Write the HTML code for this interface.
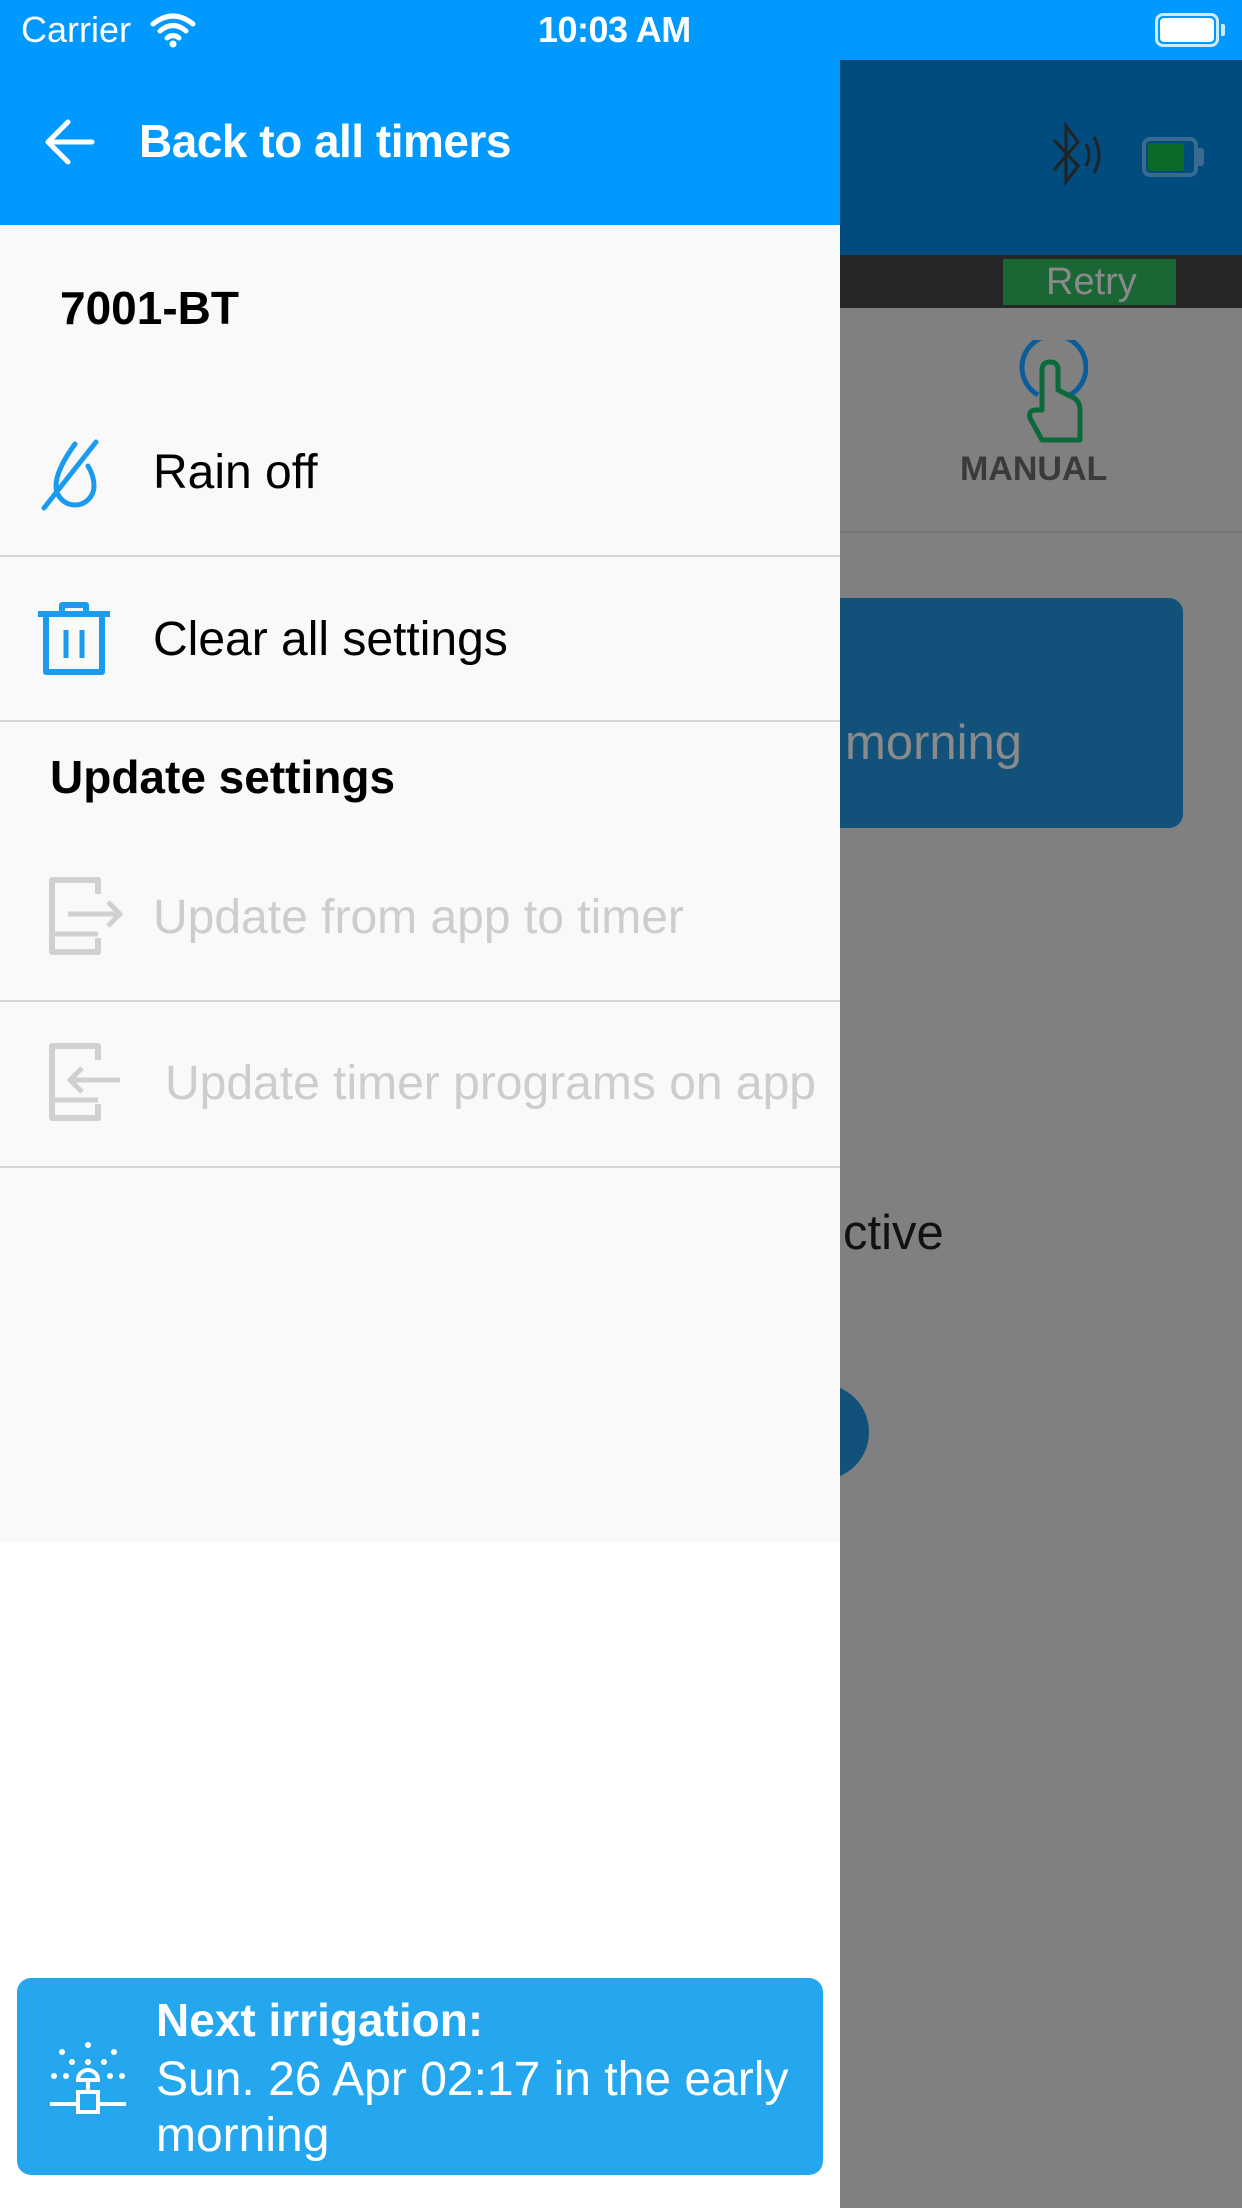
<!DOCTYPE html>
<html><head><meta charset="utf-8"><style>
*{margin:0;padding:0;box-sizing:border-box}
body{width:1242px;height:2208px;position:relative;overflow:hidden;background:#808080;font-family:"Liberation Sans",sans-serif}
.a{position:absolute}
.t{position:absolute;white-space:nowrap;line-height:1}
.sep{position:absolute;left:0;width:840px;height:2px;background:#d6d6d6}
</style></head><body>
<!-- background app (dimmed) -->
<div class="a" style="left:840px;top:60px;width:402px;height:195px;background:#004c7f"></div>
<div class="a" style="left:840px;top:255px;width:402px;height:53px;background:#262626"></div>
<div class="a" style="left:1003px;top:259px;width:173px;height:46px;background:#1a6634"></div>
<div class="t" style="left:1046px;top:263px;font-size:38px;color:#8a8a8a">Retry</div>
<svg class="a" style="left:1048px;top:120px" width="66" height="70" viewBox="0 0 66 70"><path d="M6 20 L30 46 L18 62 L18 6 L30 22 L6 50" fill="none" stroke="#222" stroke-width="3"/><path d="M38 24 Q44 35 38 46 M46 17 Q56 35 46 53" fill="none" stroke="#222" stroke-width="3"/></svg>
<div class="a" style="left:1142px;top:137px;width:56px;height:40px;border:4px solid #3a6a90;border-radius:8px"></div>
<div class="a" style="left:1148px;top:143px;width:36px;height:28px;background:#0a6a2a;border-radius:3px"></div>
<div class="a" style="left:1198px;top:148px;width:6px;height:18px;background:#3a6a90;border-radius:0 3px 3px 0"></div>
<div class="a" style="left:840px;top:531px;width:402px;height:2px;background:#777"></div>
<svg class="a" style="left:1008px;top:340px" width="80" height="110" viewBox="0 0 80 110"><path d="M30 55 A32 32 0 1 1 62 55" fill="none" stroke="#0a5d9a" stroke-width="5"/><path d="M34 70 L34 30 Q34 22 42 22 Q50 22 50 30 L50 50 L66 58 Q72 62 72 70 L72 100 L34 100 L22 78 Q20 70 28 70 Z" fill="none" stroke="#0a6a3a" stroke-width="5" stroke-linejoin="round"/></svg>
<div class="t" style="left:960px;top:452px;font-size:34px;font-weight:bold;color:#3a3a3a">MANUAL</div>
<div class="a" style="left:800px;top:598px;width:383px;height:230px;background:#12527a;border-radius:14px"></div>
<div class="t" style="left:845px;top:719px;font-size:49px;color:#8a8a8a">morning</div>
<div class="t" style="left:843px;top:1209px;font-size:49px;color:#111">ctive</div>
<div class="a" style="left:773px;top:1384px;width:96px;height:96px;background:#12527a;border-radius:50%"></div>

<!-- status bar -->
<div class="a" style="left:0;top:0;width:1242px;height:60px;background:#0099ff"></div>
<div class="t" style="left:21px;top:12px;font-size:36px;color:#fff">Carrier</div>
<svg class="a" style="left:150px;top:12px" width="46" height="36" viewBox="0 0 46 36"><path d="M3 12 Q23 -4 43 12 M10 19 Q23 8 36 19 M17 26 Q23 21 29 26" fill="none" stroke="#fff" stroke-width="5" stroke-linecap="round"/><circle cx="23" cy="32" r="3.5" fill="#fff"/></svg>
<div class="t" style="left:538px;top:12px;font-size:36px;color:#fff;font-weight:bold;letter-spacing:-0.5px">10:03 AM</div>
<div class="a" style="left:1155px;top:13px;width:64px;height:34px;border:3px solid #cfe9ff;border-radius:8px"></div>
<div class="a" style="left:1160px;top:18px;width:54px;height:24px;background:#fff;border-radius:4px"></div>
<div class="a" style="left:1221px;top:24px;width:4px;height:12px;background:#cfe9ff;border-radius:0 2px 2px 0"></div>

<!-- drawer -->
<div class="a" style="left:0;top:60px;width:840px;height:165px;background:#0099ff"></div>
<svg class="a" style="left:44px;top:118px" width="52" height="48" viewBox="0 0 52 48"><path d="M48 24 H5 M24 4 L4 24 L24 44" fill="none" stroke="#fff" stroke-width="5" stroke-linecap="round" stroke-linejoin="round"/></svg>
<div class="t" style="left:139px;top:118px;font-size:46px;font-weight:bold;color:#fff;letter-spacing:-0.5px">Back to all timers</div>
<div class="a" style="left:0;top:225px;width:840px;height:1317px;background:#f9f9f9"></div>
<div class="a" style="left:0;top:1542px;width:840px;height:666px;background:#fff"></div>
<div class="t" style="left:60px;top:285px;font-size:46px;font-weight:bold;color:#000">7001-BT</div>
<svg class="a" style="left:38px;top:436px" width="74" height="78" viewBox="0 0 74 78"><path d="M37 8 Q18 34 18 50 A19 19 0 0 0 56 50 Q56 40 50 30" fill="none" stroke="#1a9bf0" stroke-width="5" stroke-linecap="round"/><path d="M58 6 L6 72" stroke="#1a9bf0" stroke-width="5" stroke-linecap="round"/></svg>
<div class="t" style="left:153px;top:449px;font-size:48px;color:#000">Rain off</div>
<div class="sep" style="top:555px"></div>
<svg class="a" style="left:34px;top:600px" width="80" height="78" viewBox="0 0 80 78"><path d="M4 14 H76 M28 14 V5 H52 V14" fill="none" stroke="#1a9bf0" stroke-width="6" stroke-linejoin="round"/><path d="M12 16 V72 H68 V16" fill="none" stroke="#1a9bf0" stroke-width="6" stroke-linejoin="round"/><path d="M32 30 V58 M48 30 V58" stroke="#1a9bf0" stroke-width="5"/></svg>
<div class="t" style="left:153px;top:616px;font-size:48px;color:#000">Clear all settings</div>
<div class="sep" style="top:720px"></div>
<div class="t" style="left:50px;top:754px;font-size:46px;font-weight:bold;color:#000">Update settings</div>
<svg class="a" style="left:46px;top:874px" width="80" height="84" viewBox="0 0 80 84"><path d="M52 20 V6 H6 V78 H52 V64" fill="none" stroke="#d0d0d0" stroke-width="6" stroke-linejoin="round"/><path d="M6 60 H52" stroke="#d0d0d0" stroke-width="5"/><path d="M22 40 H74 M62 28 L74 40 L62 52" fill="none" stroke="#d0d0d0" stroke-width="5" stroke-linejoin="round"/></svg>
<div class="t" style="left:153px;top:894px;font-size:48px;color:#cdcdcd">Update from app to timer</div>
<div class="sep" style="top:1000px"></div>
<svg class="a" style="left:46px;top:1040px" width="80" height="84" viewBox="0 0 80 84"><path d="M52 20 V6 H6 V78 H52 V64" fill="none" stroke="#d0d0d0" stroke-width="6" stroke-linejoin="round"/><path d="M6 60 H52" stroke="#d0d0d0" stroke-width="5"/><path d="M74 40 H24 M36 28 L24 40 L36 52" fill="none" stroke="#d0d0d0" stroke-width="5" stroke-linejoin="round"/></svg>
<div class="t" style="left:165px;top:1060px;font-size:48px;color:#cdcdcd">Update timer programs on app</div>
<div class="sep" style="top:1166px"></div>

<!-- next irrigation card -->
<div class="a" style="left:17px;top:1978px;width:806px;height:197px;background:#25a7f0;border-radius:14px"></div>
<svg class="a" style="left:48px;top:2040px" width="80" height="76" viewBox="0 0 80 76"><g fill="#fff"><circle cx="40" cy="5" r="3"/><circle cx="14" cy="12" r="3"/><circle cx="66" cy="12" r="3"/><circle cx="24" cy="22" r="3"/><circle cx="40" cy="22" r="3"/><circle cx="56" cy="22" r="3"/><circle cx="6" cy="36" r="3"/><circle cx="18" cy="36" r="3"/><circle cx="62" cy="36" r="3"/><circle cx="74" cy="36" r="3"/></g><path d="M30 40 A10 10 0 0 1 50 40 Z M40 40 V52 M2 64 H30 M50 64 H78" fill="none" stroke="#fff" stroke-width="4"/><rect x="30" y="52" width="20" height="20" fill="none" stroke="#fff" stroke-width="4"/></svg>
<div class="t" style="left:156px;top:1997px;font-size:46px;font-weight:bold;color:#fff">Next irrigation:</div>
<div class="t" style="left:156px;top:2056px;font-size:48px;color:#fff">Sun. 26 Apr 02:17 in the early</div>
<div class="t" style="left:156px;top:2112px;font-size:48px;color:#fff">morning</div>
</body></html>
